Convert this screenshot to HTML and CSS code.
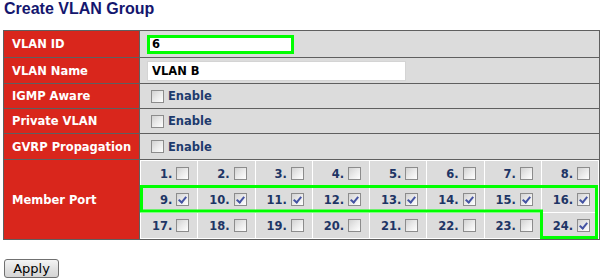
FILE: index.html
```html
<!DOCTYPE html>
<html>
<head>
<meta charset="utf-8">
<link rel="stylesheet" href="styles.css">
</head>
<body>
<h1 class="title">Create VLAN Group</h1>
<table class="form">
  <colgroup><col class="c-label"><col></colgroup>
  <tr class="r1">
    <td class="label">VLAN ID</td>
    <td class="value"><input class="txt txt-id" type="text" value="6"></td>
  </tr>
  <tr class="r2">
    <td class="label">VLAN Name</td>
    <td class="value"><input class="txt txt-name" type="text" value="VLAN B"></td>
  </tr>
  <tr class="r3">
    <td class="label">IGMP Aware</td>
    <td class="value"><label class="opt"><input class="cb" type="checkbox"><span>Enable</span></label></td>
  </tr>
  <tr class="r4">
    <td class="label">Private VLAN</td>
    <td class="value"><label class="opt"><input class="cb" type="checkbox"><span>Enable</span></label></td>
  </tr>
  <tr class="r5">
    <td class="label">GVRP Propagation</td>
    <td class="value"><label class="opt"><input class="cb" type="checkbox"><span>Enable</span></label></td>
  </tr>
  <tr class="r6">
    <td class="label">Member Port</td>
    <td class="ports-cell">
      <table class="ports">
        <tr>
          <td>1.<input class="cb" type="checkbox"></td>
          <td>2.<input class="cb" type="checkbox"></td>
          <td>3.<input class="cb" type="checkbox"></td>
          <td>4.<input class="cb" type="checkbox"></td>
          <td>5.<input class="cb" type="checkbox"></td>
          <td>6.<input class="cb" type="checkbox"></td>
          <td>7.<input class="cb" type="checkbox"></td>
          <td>8.<input class="cb" type="checkbox"></td>
        </tr>
        <tr>
          <td>9.<input class="cb" type="checkbox" checked></td>
          <td>10.<input class="cb" type="checkbox" checked></td>
          <td>11.<input class="cb" type="checkbox" checked></td>
          <td>12.<input class="cb" type="checkbox" checked></td>
          <td>13.<input class="cb" type="checkbox" checked></td>
          <td>14.<input class="cb" type="checkbox" checked></td>
          <td>15.<input class="cb" type="checkbox" checked></td>
          <td>16.<input class="cb" type="checkbox" checked></td>
        </tr>
        <tr>
          <td>17.<input class="cb" type="checkbox"></td>
          <td>18.<input class="cb" type="checkbox"></td>
          <td>19.<input class="cb" type="checkbox"></td>
          <td>20.<input class="cb" type="checkbox"></td>
          <td>21.<input class="cb" type="checkbox"></td>
          <td>22.<input class="cb" type="checkbox"></td>
          <td>23.<input class="cb" type="checkbox"></td>
          <td>24.<input class="cb" type="checkbox" checked></td>
        </tr>
      </table>
    </td>
  </tr>
</table>
<div class="actions"><button class="btn" type="button">Apply</button></div>
<svg class="highlight" width="603" height="280" viewBox="0 0 603 280">
  <polygon points="141.5,186.5 596.5,186.5 596.5,237.5 541.5,237.5 541.5,211 141.5,211" fill="none" stroke="#00ff00" stroke-width="3"/>
</svg>
</body>
</html>
```

FILE: styles.css
```css
html, body {
  margin: 0;
  padding: 0;
  background: #ffffff;
}
body {
  padding: 0 3px;
  font-family: "DejaVu Sans", Verdana, sans-serif;
  position: relative;
  width: 597px;
  height: 280px;
  overflow: hidden;
}
.title {
  margin: 0 0 0 1px;
  font-family: "Liberation Sans", Arial, sans-serif;
  font-size: 16px;
  line-height: 18px;
  font-weight: bold;
  color: #14166e;
}
.form {
  margin-top: 12px;
  width: 597px;
  border-collapse: collapse;
  table-layout: fixed;
  border: 1px solid #555555;
}
.c-label {
  width: 136px;
}
.form > tbody > tr > td {
  border: 1px solid #5f5f5f;
  padding: 0;
  vertical-align: middle;
}
.form td.label {
  background: #d9261c;
  color: #ffffff;
  font-weight: bold;
  font-size: 11.5px;
  padding-left: 8px;
  white-space: nowrap;
}
.form td.value {
  background: #dcdcdc;
  padding-left: 7px;
}
.r1 td { height: 26px; }
.r2 td { height: 25px; }
.r3 td { height: 24px; }
.r4 td { height: 24px; }
.r5 td { height: 25px; }
.r6 td.label { height: 79px; }
.txt {
  box-sizing: border-box;
  display: block;
  margin: 0;
  font-family: "DejaVu Sans", Verdana, sans-serif;
  font-weight: bold;
  font-size: 11.5px;
  color: #000000;
  background: #ffffff;
  outline: none;
}
.txt-id {
  width: 147px;
  height: 19px;
  border: 3px solid #00ff00;
  padding: 0 0 0 2px;
}
.txt-name {
  width: 259px;
  height: 20px;
  border: 1px solid #d4d4d4;
  padding: 0 0 0 4px;
}
.opt {
  display: flex;
  align-items: center;
  font-weight: bold;
  font-size: 11.5px;
  color: #1e3a6d;
}
.cb {
  -webkit-appearance: none;
  appearance: none;
  box-sizing: border-box;
  width: 13px;
  height: 13px;
  margin: 0 4px 0 4px;
  border: 1px solid #8c8c8c;
  background: linear-gradient(135deg, #d2d2d2 0%, #eaeaea 50%, #ffffff 100%);
  position: relative;
  vertical-align: -2px;
  flex: none;
}
.cb:checked::after {
  content: "";
  position: absolute;
  left: 3px;
  top: 1px;
  width: 3px;
  height: 6px;
  border-right: 2px solid #4453a3;
  border-bottom: 2px solid #4453a3;
  transform: rotate(40deg);
}
.ports-cell {
  background: #ffffff;
  padding: 0;
}
.ports {
  width: 100%;
  border-collapse: separate;
  border-spacing: 1px;
  table-layout: fixed;
}
.ports td {
  background: #dcdcdc;
  height: 25px;
  padding: 0 5px 0 0;
  text-align: right;
  vertical-align: middle;
  font-weight: bold;
  font-size: 11.5px;
  color: #1e3565;
  white-space: nowrap;
}
.ports .cb {
  margin: 0 3px 0 4px;
}
.actions {
  margin-top: 18px;
  padding-left: 1px;
}
.btn {
  box-sizing: border-box;
  width: 55px;
  height: 19px;
  padding: 0;
  border: 1px solid #707070;
  border-radius: 3px;
  background: linear-gradient(#f4f4f4, #e2e2e2 50%, #d4d4d4);
  font-family: "DejaVu Sans", Verdana, sans-serif;
  font-size: 13px;
  color: #000000;
  line-height: 17px;
}
.highlight {
  position: absolute;
  left: 0;
  top: 0;
  pointer-events: none;
}
```
